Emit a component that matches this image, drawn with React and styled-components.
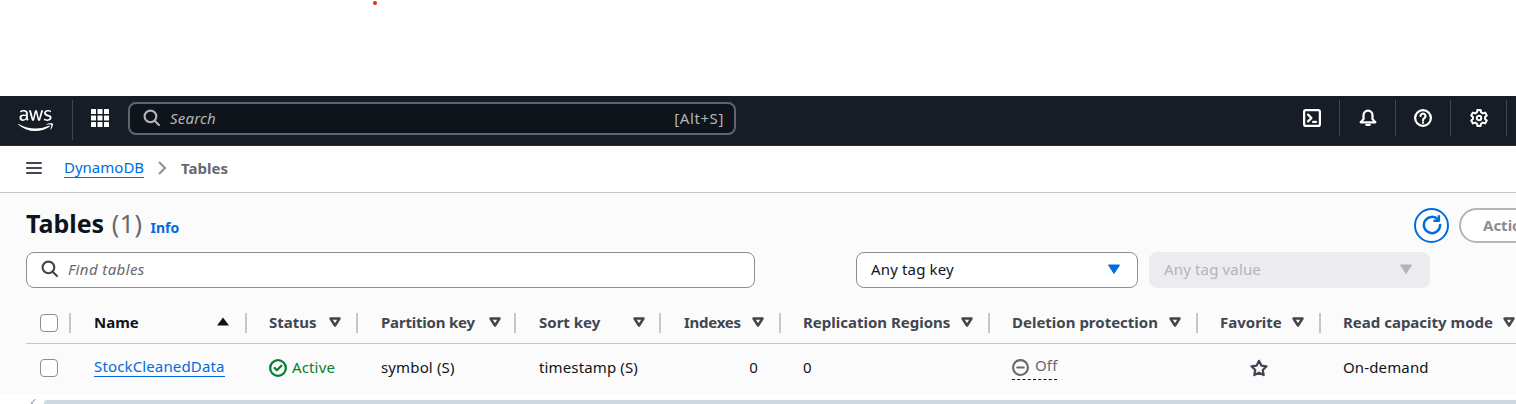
import styled, { createGlobalStyle } from 'styled-components';
import { FaAws } from 'react-icons/fa';

const GlobalStyle = createGlobalStyle`
    html, body {
        margin: 0;
        height: 404px;
        overflow: hidden;
        background: #ffffff;
        font-family: 'Noto Sans', 'Open Sans', sans-serif;
        font-size: 15px;
        color: #0f141a;
    }
    * {
        box-sizing: border-box;
    }
`;

const Page = styled.div`
    position: relative;
    width: 1516px;
    height: 404px;
    overflow: hidden;
    padding-top: 96px;
`;

const RedDot = styled.span`
    position: absolute;
    left: 373px;
    top: 1px;
    width: 4px;
    height: 4px;
    border-radius: 50%;
    background: #e8262a;
`;

const Nav = styled.header`
    display: flex;
    align-items: flex-start;
    height: 50px;
    background: #161d26;
    border-bottom: 1px solid #232b37;
`;

const Logo = styled.div`
    width: 73px;
    height: 40px;
    margin-top: 4px;
    padding-left: 18px;
    display: flex;
    align-items: center;
    border-right: 1px solid #424650;
    color: #ffffff;
`;

const Apps = styled.div`
    width: 55px;
    height: 44px;
    padding-right: 2px;
    display: flex;
    align-items: center;
    justify-content: center;
`;

const Search = styled.div`
    width: 608px;
    height: 33px;
    margin-top: 6px;
    padding: 0 10px 2px 13px;
    display: flex;
    align-items: center;
    gap: 10px;
    background: #0f141a;
    border: 2px solid #5f6570;
    border-radius: 8px;
    color: #b4b4bb;
`;

const SearchText = styled.span`
    flex: 1;
    font-style: italic;
    letter-spacing: 0.2px;
`;

const ShortcutText = styled.span`
    letter-spacing: 0.6px;
`;

const NavRight = styled.div`
    margin-left: auto;
    display: flex;
    margin-right: 9px;
`;

const NavButton = styled.div`
    width: 55.6px;
    height: 36px;
    margin-top: 4px;
    display: flex;
    align-items: center;
    justify-content: center;
    border-right: 1px solid #424650;
    color: #ffffff;
`;

const Crumbs = styled.nav`
    height: 47px;
    padding-left: 26px;
    padding-bottom: 2px;
    display: flex;
    align-items: center;
    background: #ffffff;
    border-bottom: 1px solid #c6c6cd;
    color: #424650;
`;

const Crumb = styled.a`
    margin-left: 22px;
    color: #006ce0;
    line-height: 19px;
    border-bottom: 1px solid #006ce0;
`;

const CrumbCurrent = styled.span`
    font-weight: 700;
    color: #656871;
`;

const Content = styled.main`
    height: 201px;
    background: #fbfbfc;
    padding-left: 26px;
`;

const TitleRow = styled.div`
    height: 59px;
    display: flex;
    align-items: center;
`;

const Title = styled.h1`
    margin: 0;
    font-size: 25px;
    line-height: 30px;
    font-weight: 700;
    color: #0f141a;
`;

const Count = styled.span`
    margin-left: 1px;
    font-weight: 400;
    letter-spacing: 0.5px;
    color: #656871;
`;

const InfoLink = styled.a`
    margin: 10px 0 0 8px;
    font-size: 14px;
    font-weight: 700;
    color: #006ce0;
`;

const TitleActions = styled.div`
    margin-left: auto;
    display: flex;
    align-items: center;
    gap: 10px;
    margin-top: 5px;
    margin-right: -60px;
`;

const RefreshButton = styled.div`
    width: 35px;
    height: 35px;
    display: flex;
    align-items: center;
    justify-content: center;
    border: 2px solid #006ce0;
    border-radius: 50%;
    color: #006ce0;
    background: #ffffff;
`;

const ActionsButton = styled.div`
    width: 117px;
    height: 35px;
    padding-left: 22px;
    display: flex;
    align-items: center;
    border: 2px solid #b4b4bb;
    border-radius: 20px;
    font-weight: 700;
    color: #8c8c94;
    background: #ffffff;
`;

const Filters = styled.div`
    display: flex;
    align-items: center;
`;

const FindBox = styled.div`
    width: 729px;
    height: 36px;
    padding-left: 14px;
    padding-bottom: 3px;
    display: flex;
    align-items: center;
    gap: 10px;
    background: #ffffff;
    border: 1px solid #8c8c94;
    border-radius: 8px;
    color: #424650;
`;

const FindText = styled.span`
    font-style: italic;
    letter-spacing: 0.4px;
    color: #656871;
`;

const Select = styled.div`
    width: ${(p) => p.$width}px;
    height: 36px;
    margin-left: ${(p) => p.$gap}px;
    padding: 0 16px 3px 14px;
    display: flex;
    align-items: center;
    justify-content: space-between;
    letter-spacing: 0.15px;
    border-radius: 8px;
    border: 1px solid ${(p) => (p.$disabled ? '#ebebf0' : '#8c8c94')};
    background: ${(p) => (p.$disabled ? '#ebebf0' : '#ffffff')};
    color: ${(p) => (p.$disabled ? '#b4b4bb' : '#0f141a')};
`;

const Table = styled.div`
    width: 1600px;
    margin-top: 16px;
`;

const Row = styled.div`
    display: grid;
    grid-template-columns: 45px 176px 111px 158px 145px 120px 209px 208px 123px 200px;
    align-items: center;
    height: ${(p) => p.$height}px;
    padding-bottom: ${(p) => (p.$head ? 2 : 0)}px;
    border-bottom: ${(p) => (p.$head ? '1px solid #c6c6cd' : 'none')};
`;

const HeadCell = styled.div`
    height: 20px;
    padding: 0 ${(p) => p.$pr ?? 14}px 2px ${(p) => p.$pl ?? 23}px;
    display: flex;
    align-items: center;
    justify-content: space-between;
    border-right: 2px solid #c6c6cd;
    font-weight: 700;
    letter-spacing: ${(p) => p.$ls ?? 0}px;
    color: ${(p) => (p.$active ? '#0f141a' : '#424650')};
    white-space: nowrap;

    &:last-child {
        border-right: none;
    }
`;

const CheckCell = styled.div`
    height: ${(p) => (p.$head ? 20 : 18)}px;
    padding-left: 14px;
    display: flex;
    align-items: center;
    border-right: ${(p) => (p.$head ? '2px solid #c6c6cd' : 'none')};
`;

const Checkbox = styled.div`
    width: 18px;
    height: 18px;
    background: #ffffff;
    border: 1px solid #8c8c94;
    border-radius: 4px;
`;

const Cell = styled.div`
    padding-left: ${(p) => p.$pl ?? 23}px;
    padding-right: ${(p) => (p.$right ? 23 : 0)}px;
    display: flex;
    align-items: center;
    justify-content: ${(p) => (p.$right ? 'flex-end' : 'flex-start')};
    letter-spacing: 0.14px;
    white-space: nowrap;
`;

const TextCell = styled(Cell)`
    padding-bottom: 2px;
`;

const NameLink = styled.a`
    color: #006ce0;
    line-height: 18px;
    padding-bottom: 1px;
    border-bottom: 1px solid #006ce0;
`;

const Active = styled.span`
    display: flex;
    align-items: center;
    gap: 5px;
    color: #00802f;
`;

const ActiveLabel = styled.span`
    margin-bottom: 2px;
`;

const Off = styled.span`
    display: flex;
    align-items: center;
    gap: 6px;
    height: 24px;
    color: #656871;
    border-bottom: 1px dashed #0f141a;
`;

const OffLabel = styled.span`
    margin-bottom: 5px;
`;

const StarCell = styled(Cell)`
    padding-left: 52px;
    color: #424650;
`;

const ScrollArea = styled.div`
    position: relative;
    height: 10px;
    background: #ffffff;
`;

const ScrollThumb = styled.div`
    position: absolute;
    left: 44px;
    right: 0;
    top: 6px;
    height: 4px;
    border-radius: 3px 0 0 0;
    background: #d1d9e0;
`;

const ScrollArrow = styled.div`
    position: absolute;
    left: 32px;
    top: 6px;
    width: 6px;
    height: 6px;
    border-left: 1px solid #9aa0a8;
    border-top: 1px solid #9aa0a8;
    transform: rotate(-45deg);
`;

const Icon = ({ children, size = 16, width = 2 }) => (
    <svg
        width={size}
        height={size}
        viewBox="0 0 16 16"
        fill="none"
        stroke="currentColor"
        strokeWidth={width}
        strokeLinecap="round"
        strokeLinejoin="round"
    >
        {children}
    </svg>
);

const SortCaret = ({ dir }) => (
    <svg width="14" height="14" viewBox="0 0 14 14">
        {dir === 'asc' ? (
            <path d="M7 2.5 13 10.5H1Z" fill="#0f141a" />
        ) : (
            <path
                d="M2.5 3.5h9L7 10.5Z"
                fill="none"
                stroke="#424650"
                strokeWidth="2.5"
                strokeLinejoin="round"
            />
        )}
    </svg>
);

const SolidCaret = ({ color }) => (
    <svg width="14" height="12" viewBox="0 0 14 12">
        <path d="M1.5 2h11L7 10.5Z" fill={color} stroke={color} strokeLinejoin="round" />
    </svg>
);

const SearchIcon = () => (
    <Icon size={17}>
        <circle cx="7" cy="7" r="5.5" />
        <path d="m11 11 4 4" />
    </Icon>
);

const AppsIcon = () => (
    <svg width="18" height="18" viewBox="0 0 18 18" fill="#ffffff">
        {[0, 6.5, 13].map((y) =>
            [0, 6.5, 13].map((x) => <rect key={`${x}-${y}`} x={x} y={y} width="5" height="5" rx="0.5" />)
        )}
    </svg>
);

const columns = [
    { label: 'Status', pl: 22 },
    { label: 'Partition key', pr: 12, ls: -0.2 },
    { label: 'Sort key', pr: 13 },
    { label: 'Indexes', ls: -0.25 },
    { label: 'Replication Regions', pl: 22 },
    { label: 'Deletion protection', pl: 22 },
    { label: 'Favorite', pl: 22 },
    { label: 'Read capacity mode', pl: 22, pr: 5 },
];

export default function App() {
    return (
        <Page>
            <GlobalStyle />
            <RedDot />

            <Nav>
                <Logo>
                    <FaAws size={35} />
                </Logo>
                <Apps>
                    <AppsIcon />
                </Apps>
                <Search>
                    <SearchIcon />
                    <SearchText>Search</SearchText>
                    <ShortcutText>[Alt+S]</ShortcutText>
                </Search>
                <NavRight>
                    <NavButton>
                        <Icon size={18}>
                            <rect x="1" y="1" width="14" height="14" rx="1.5" />
                            <path d="m4.5 5 3 3-3 3M9 11.5h2.5" />
                        </Icon>
                    </NavButton>
                    <NavButton>
                        <Icon size={18}>
                            <path d="M8 1.5c-2.6 0-4 2-4 4.2V9l-2.5 2.8h13L12 9V5.700c0-2.200-1.400-4.200-4-4.200Z" />
                            <path d="M6.500 14h3" />
                        </Icon>
                    </NavButton>
                    <NavButton>
                        <Icon size={18}>
                            <circle cx="8" cy="8" r="7" />
                            <path d="M5.800 6.200a2.200 2.200 0 1 1 3.400 1.900c-.8.500-1.200.9-1.200 1.900M8 12v.2" />
                        </Icon>
                    </NavButton>
                    <NavButton>
                        <Icon size={18} width={1.8}>
                            <path d="M6.500 1h3l.4 2 1.500.9 2-.7 1.500 2.600-1.500 1.300v1.800l1.500 1.300-1.500 2.600-2-.7-1.500.9-.4 2h-3l-.4-2-1.500-.9-2 .7L1.100 10.200l1.500-1.300V7.100L1.100 5.800l1.500-2.600 2 .7 1.500-.9.4-2Z" />
                            <circle cx="8" cy="8" r="2" />
                        </Icon>
                    </NavButton>
                </NavRight>
            </Nav>

            <Crumbs>
                <Icon>
                    <path d="M1 3h14M1 8h14M1 13h14" />
                </Icon>
                <Crumb>DynamoDB</Crumb>
                <svg width="37" height="16" viewBox="0 0 37 16" fill="none" stroke="#8c8c94" strokeWidth="2">
                    <path d="m15 2 6 6-6 6" />
                </svg>
                <CrumbCurrent>Tables</CrumbCurrent>
            </Crumbs>

            <Content>
                <TitleRow>
                    <Title>
                        Tables <Count>(1)</Count>
                    </Title>
                    <InfoLink>Info</InfoLink>
                    <TitleActions>
                        <RefreshButton>
                            <Icon size={20}>
                                <path d="M14.500 8A6.500 6.500 0 1 1 12.800 3.600" />
                                <path d="M13.500 1v3.500H10" />
                            </Icon>
                        </RefreshButton>
                        <ActionsButton>Actions</ActionsButton>
                    </TitleActions>
                </TitleRow>

                <Filters>
                    <FindBox>
                        <SearchIcon />
                        <FindText>Find tables</FindText>
                    </FindBox>
                    <Select $width={282} $gap={101}>
                        Any tag key
                        <SolidCaret color="#006ce0" />
                    </Select>
                    <Select $width={281} $gap={11} $disabled>
                        Any tag value
                        <SolidCaret color="#b4b4bb" />
                    </Select>
                </Filters>

                <Table>
                    <Row $head $height={40}>
                        <CheckCell $head>
                            <Checkbox />
                        </CheckCell>
                        <HeadCell $active $pr={15}>
                            Name
                            <SortCaret dir="asc" />
                        </HeadCell>
                        {columns.map((col) => (
                            <HeadCell key={col.label} $pr={col.pr} $pl={col.pl} $ls={col.ls}>
                                {col.label}
                                <SortCaret />
                            </HeadCell>
                        ))}
                    </Row>
                    <Row $height={47}>
                        <CheckCell>
                            <Checkbox />
                        </CheckCell>
                        <TextCell>
                            <NameLink>StockCleanedData</NameLink>
                        </TextCell>
                        <Cell $pl={22}>
                            <Active>
                                <Icon size={18}>
                                    <circle cx="8" cy="8" r="7" />
                                    <path d="m5 8 2 2 4-4" />
                                </Icon>
                                <ActiveLabel>Active</ActiveLabel>
                            </Active>
                        </Cell>
                        <TextCell>symbol (S)</TextCell>
                        <TextCell>timestamp (S)</TextCell>
                        <TextCell $right>0</TextCell>
                        <TextCell $pl={22}>0</TextCell>
                        <Cell $pl={22}>
                            <Off>
                                <Icon size={17}>
                                    <circle cx="8" cy="8" r="7" />
                                    <path d="M5 8h6" />
                                </Icon>
                                <OffLabel>Off</OffLabel>
                            </Off>
                        </Cell>
                        <StarCell>
                            <Icon size={18}>
                                <path d="m8 1.600 2.080 4.200 4.620.670-3.340 3.260.780 4.600L8 12.170l-4.140 2.160.780-4.600L1.300 6.470l4.620-.670L8 1.600Z" />
                            </Icon>
                        </StarCell>
                        <TextCell $pl={22}>On-demand</TextCell>
                    </Row>
                </Table>
            </Content>

            <ScrollArea>
                <ScrollArrow />
                <ScrollThumb />
            </ScrollArea>
        </Page>
    );
}
